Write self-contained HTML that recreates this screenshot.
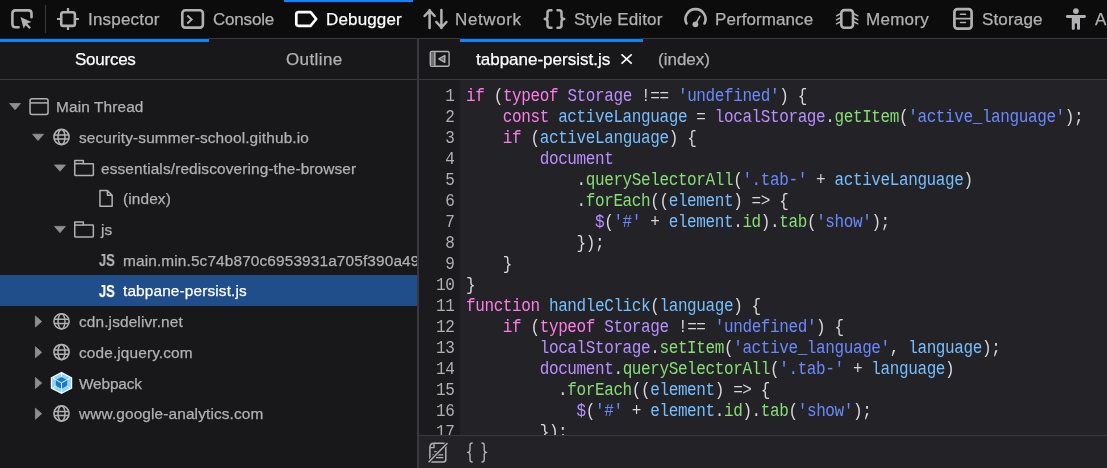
<!DOCTYPE html>
<html><head><meta charset="utf-8">
<style>
*{margin:0;padding:0;box-sizing:border-box}
html,body{width:1107px;height:468px;overflow:hidden;background:#232327}
body{position:relative;font-family:"Liberation Sans",sans-serif}
.a{position:absolute}
.t{position:absolute;white-space:pre;line-height:20px;will-change:transform;-webkit-text-stroke:0.25px currentColor}
#toolbar{left:0;top:0;width:1107px;height:38px;background:#0c0c0d}
#tbb{left:209px;top:38px;width:251px;height:1px;background:#38383d}
#tbb2{left:643px;top:38px;width:464px;height:1px;background:#38383d}
.lbl{font-size:17px;color:#b1b1b3;top:10.1px}
#left{left:0;top:39px;width:417px;height:429px;background:#18181a}
#split{left:417px;top:39px;width:2px;height:429px;background:#38383d}
.tree{font-size:15.4px;letter-spacing:0.13px;color:#b1b1b3}
.jsi{font-size:16.3px;font-weight:bold;transform:scaleX(0.8);transform-origin:0 0}
svg{position:absolute;overflow:visible}
#code{font-family:"Liberation Mono",monospace;font-size:15.35px;color:#d7d7db}
.ln{will-change:transform;position:absolute;left:419px;width:35.5px;text-align:right;color:#b0b0b3;font-family:"Liberation Mono",monospace;font-size:16px;letter-spacing:-0.39px;white-space:pre;line-height:20px;transform:scaleY(1.1);transform-origin:0 14.5px}
.cl{will-change:transform;position:absolute;left:466px;white-space:pre;line-height:20px;font-family:"Liberation Mono",monospace;font-size:16px;letter-spacing:-0.39px;color:#d7d7db;transform:scaleY(1.1);transform-origin:0 14.5px}
.k{color:#ff7de9}.v2{color:#b98eff}.v{color:#75bfff}.p{color:#86de74}.s{color:#6b89ff}
</style></head><body>
<!-- toolbar -->
<div id="toolbar" class="a"></div>
<div id="tbb" class="a"></div><div id="tbb2" class="a"></div>
<div class="a" style="left:284px;top:0;width:129px;height:2px;background:#0a84ff"></div>
<div class="a" style="left:45px;top:5px;width:1px;height:28px;background:#38383d"></div>

<!-- picker icon -->
<svg style="left:0;top:0" width="1" height="1">
  <path d="M18.6 27.3 H15.4 Q12.4 27.3 12.4 24.3 V13.4 Q12.4 10.4 15.4 10.4 H28.5 Q31.5 10.4 31.5 13.4 V17.2" fill="none" stroke="#b1b1b3" stroke-width="2.6" stroke-linecap="round"/>
  <path d="M20.5 17.1 L31.4 22.1 L27.2 23.6 L30.9 27.4 L29.3 29 L25.6 25.2 L23.6 28.6 Z" fill="#b1b1b3"/>
</svg>
<!-- inspector icon -->
<svg style="left:0;top:0" width="1" height="1">
  <rect x="61.2" y="12.3" width="13.7" height="13.6" rx="2.2" fill="none" stroke="#b1b1b3" stroke-width="2.6"/>
  <path d="M68 8 V12 M68 26 V30 M57 19 H61 M75 19 H79" stroke="#b1b1b3" stroke-width="2.2"/>
</svg>
<div class="t lbl" style="left:87.8px;letter-spacing:0.2px">Inspector</div>
<!-- console icon -->
<svg style="left:0;top:0" width="1" height="1">
  <rect x="182.3" y="10.2" width="20.6" height="17.4" rx="3" fill="none" stroke="#b1b1b3" stroke-width="2.6"/>
  <path d="M187.3 15.6 L191.6 19.6 L187.3 23.6" fill="none" stroke="#b1b1b3" stroke-width="2"/>
</svg>
<div class="t lbl" style="left:212.5px;letter-spacing:-0.2px">Console</div>
<!-- debugger icon -->
<svg style="left:0;top:0" width="1" height="1">
  <path d="M298.5 12.2 H310.6 L316.2 19 L310.6 25.8 H298.5 Q296.3 25.8 296.3 23.6 V14.4 Q296.3 12.2 298.5 12.2 Z" fill="none" stroke="#fff" stroke-width="2.7" stroke-linejoin="round"/>
</svg>
<div class="t lbl" style="left:325.8px;letter-spacing:0.15px;color:#fff">Debugger</div>
<!-- network icon -->
<svg style="left:0;top:0" width="1" height="1">
  <path d="M429.6 10 V28 M424.6 16 L429.6 10.5 L434.6 16 M441.4 10 V28 M436.4 22 L441.4 27.5 L446.4 22" fill="none" stroke="#b1b1b3" stroke-width="2.5" stroke-linecap="round" stroke-linejoin="round"/>
</svg>
<div class="t lbl" style="left:454.5px;letter-spacing:0.6px">Network</div>
<!-- style editor icon -->
<svg style="left:0;top:0" width="1" height="1">
  <path d="M551.5 10.2 H550 Q547.5 10.2 547.5 12.7 V16.5 Q547.5 19 544.8 19 Q547.5 19 547.5 21.5 V25.3 Q547.5 27.8 550 27.8 H551.5 M557.5 10.2 H559 Q561.5 10.2 561.5 12.7 V16.5 Q561.5 19 564.2 19 Q561.5 19 561.5 21.5 V25.3 Q561.5 27.8 559 27.8 H557.5" fill="none" stroke="#b1b1b3" stroke-width="2.5" stroke-linecap="round" stroke-linejoin="round"/>
</svg>
<div class="t lbl" style="left:574px;letter-spacing:0.13px">Style Editor</div>
<!-- performance icon -->
<svg style="left:0;top:0" width="1" height="1">
  <path d="M686.5 23.5 A10 10 0 1 1 704.5 23.5" fill="none" stroke="#b1b1b3" stroke-width="2.6" stroke-linecap="round"/>
  <circle cx="695.4" cy="24.3" r="2.9" fill="#b1b1b3"/>
  <path d="M695.4 24.3 L699.8 16.3" stroke="#b1b1b3" stroke-width="1.6" stroke-linecap="round"/>
</svg>
<div class="t lbl" style="left:715px;letter-spacing:0.08px">Performance</div>
<!-- memory icon -->
<svg style="left:0;top:0" width="1" height="1">
  <rect x="841.3" y="10.1" width="11.7" height="17.6" rx="3" fill="none" stroke="#b1b1b3" stroke-width="2.6"/>
  <path d="M840 14 L836.5 15.8 M840 18 L836.5 19.8 M840 22 L836.5 23.8 M854.3 14 L857.8 15.8 M854.3 18 L857.8 19.8 M854.3 22 L857.8 23.8" stroke="#b1b1b3" stroke-width="1.5" stroke-linecap="round"/>
</svg>
<div class="t lbl" style="left:866px;letter-spacing:0.28px">Memory</div>
<!-- storage icon -->
<svg style="left:0;top:0" width="1" height="1">
  <rect x="954.4" y="9.2" width="17.2" height="19.4" rx="3" fill="none" stroke="#b1b1b3" stroke-width="2.7"/>
  <path d="M955 18.6 H971 M960.5 14.3 H965.5 M960.5 22.5 H965.5" stroke="#b1b1b3" stroke-width="1.6" stroke-linecap="round"/>
</svg>
<div class="t lbl" style="left:982.3px;letter-spacing:0.15px">Storage</div>
<!-- accessibility icon -->
<svg style="left:0;top:0" width="1" height="1">
  <circle cx="1075.9" cy="11.1" r="2.9" fill="#b1b1b3"/>
  <path d="M1067.3 16.5 H1084.5" stroke="#b1b1b3" stroke-width="2.8" stroke-linecap="round"/>
  <path d="M1071.8 15.5 H1080 V23.2 H1080 V28.8 Q1080 29.7 1079 29.7 H1078 Q1077 29.7 1077 28.8 V23.5 H1074.8 V28.8 Q1074.8 29.7 1073.8 29.7 H1072.8 Q1071.8 29.7 1071.8 28.8 Z" fill="#b1b1b3"/>
</svg>
<div class="t lbl" style="left:1095px">A</div>

<!-- left pane -->
<div id="left" class="a"></div>
<div class="a" style="left:0;top:39px;width:209px;height:3px;background:#0a84ff"></div>
<div class="a" style="left:0;top:79px;width:417px;height:1px;background:#38383d"></div>
<div class="t" style="left:75px;top:50px;font-size:17px;letter-spacing:-0.25px;color:#fff">Sources</div>
<div class="t" style="left:286px;top:50px;font-size:17px;letter-spacing:0.4px;color:#b1b1b3">Outline</div>

<div class="a" style="left:0;top:0;width:417px;height:468px;overflow:hidden"><svg style="left:0;top:0" width="1" height="1"><path d="M9.6 103.50 H20.5 L15.1 109.80 Z" fill="#8f8f92" stroke="#8f8f92" stroke-width="0.8" stroke-linejoin="round"/><rect x="30.05" y="98.65" width="18" height="15.8" rx="2" fill="none" stroke="#b1b1b3" stroke-width="1.5"/><path d="M30.05 102.90 H48.05" stroke="#b1b1b3" stroke-width="1.5"/><path d="M32.6 134.22 H43.5 L38.0 140.52 Z" fill="#8f8f92" stroke="#8f8f92" stroke-width="0.8" stroke-linejoin="round"/><circle cx="61.50" cy="137.02" r="7.6" fill="none" stroke="#b1b1b3" stroke-width="1.6"/><ellipse cx="61.50" cy="137.02" rx="3.5" ry="7.6" fill="none" stroke="#b1b1b3" stroke-width="1.5"/><path d="M54.20 134.92 H68.80 M54.20 139.12 H68.80" stroke="#b1b1b3" stroke-width="1.5"/><path d="M54.5 164.94 H65.4 L60.0 171.24 Z" fill="#8f8f92" stroke="#8f8f92" stroke-width="0.8" stroke-linejoin="round"/><path d="M74.75 160.44 H83.30 V163.64 H92.70 Q93.35 163.64 93.35 164.34 V174.84 Q93.35 175.49 92.70 175.49 H75.40 Q74.75 175.49 74.75 174.84 Z" fill="none" stroke="#b1b1b3" stroke-width="1.5" stroke-linejoin="round"/><path d="M74.75 163.64 H83.30" stroke="#b1b1b3" stroke-width="1.5"/><path d="M99.95 190.41 H107.40 L112.15 195.16 V206.21 H99.95 Z M107.40 190.41 V195.16 H112.15" fill="none" stroke="#b1b1b3" stroke-width="1.5" stroke-linejoin="round"/><path d="M54.5 226.38 H65.4 L60.0 232.68 Z" fill="#8f8f92" stroke="#8f8f92" stroke-width="0.8" stroke-linejoin="round"/><path d="M74.75 221.88 H83.30 V225.08 H92.70 Q93.35 225.08 93.35 225.78 V236.28 Q93.35 236.93 92.70 236.93 H75.40 Q74.75 236.93 74.75 236.28 Z" fill="none" stroke="#b1b1b3" stroke-width="1.5" stroke-linejoin="round"/><path d="M74.75 225.08 H83.30" stroke="#b1b1b3" stroke-width="1.5"/><path d="M35.4 316.0 L41.7 321.5 L35.4 327.0 Z" fill="#8f8f92" stroke="#8f8f92" stroke-width="0.8" stroke-linejoin="round"/><circle cx="61.50" cy="321.34" r="7.6" fill="none" stroke="#b1b1b3" stroke-width="1.6"/><ellipse cx="61.50" cy="321.34" rx="3.5" ry="7.6" fill="none" stroke="#b1b1b3" stroke-width="1.5"/><path d="M54.20 319.24 H68.80 M54.20 323.44 H68.80" stroke="#b1b1b3" stroke-width="1.5"/><path d="M35.4 346.8 L41.7 352.3 L35.4 357.8 Z" fill="#8f8f92" stroke="#8f8f92" stroke-width="0.8" stroke-linejoin="round"/><circle cx="61.50" cy="352.06" r="7.6" fill="none" stroke="#b1b1b3" stroke-width="1.6"/><ellipse cx="61.50" cy="352.06" rx="3.5" ry="7.6" fill="none" stroke="#b1b1b3" stroke-width="1.5"/><path d="M54.20 349.96 H68.80 M54.20 354.16 H68.80" stroke="#b1b1b3" stroke-width="1.5"/><path d="M35.4 377.5 L41.7 383.0 L35.4 388.5 Z" fill="#8f8f92" stroke="#8f8f92" stroke-width="0.8" stroke-linejoin="round"/><polygon points="61.50,371.87 72.21,377.40 72.21,388.46 61.50,393.99 50.79,388.46 50.79,377.40" fill="#fff"/><polygon points="61.50,373.23 70.90,378.08 70.90,387.78 61.50,392.63 52.10,387.78 52.10,378.08" fill="#8ed6fb"/><polygon points="61.50,377.11 67.14,380.02 67.14,385.84 61.50,388.75 55.86,385.84 55.86,380.02" fill="#1c78c0"/><path d="M61.50 372.93 V376.93 M61.50 392.93 V388.93 M52.84 377.93 L56.30 379.93 M70.16 377.93 L66.70 379.93 M52.84 387.93 L56.30 385.93 M70.16 387.93 L66.70 385.93 M56.30 379.93 L61.50 382.93 L66.70 379.93 M61.50 382.93 V388.93" stroke="#fff" stroke-width="0.9" fill="none"/><path d="M35.4 408.2 L41.7 413.7 L35.4 419.2 Z" fill="#8f8f92" stroke="#8f8f92" stroke-width="0.8" stroke-linejoin="round"/><circle cx="61.50" cy="413.50" r="7.6" fill="none" stroke="#b1b1b3" stroke-width="1.6"/><ellipse cx="61.50" cy="413.50" rx="3.5" ry="7.6" fill="none" stroke="#b1b1b3" stroke-width="1.5"/><path d="M54.20 411.40 H68.80 M54.20 415.60 H68.80" stroke="#b1b1b3" stroke-width="1.5"/></svg>
<div class="a" style="left:0;top:275px;width:417px;height:31px;background:#204e8a"></div>
<div class="t tree" style="left:56.4px;top:97.10px;color:#b1b1b3">Main Thread</div>
<div class="t tree" style="left:78.8px;top:127.82px;color:#b1b1b3">security-summer-school.github.io</div>
<div class="t tree" style="left:101.2px;top:158.54px;color:#b1b1b3">essentials/rediscovering-the-browser</div>
<div class="t tree" style="left:123.4px;top:189.26px;color:#b1b1b3">(index)</div>
<div class="t tree" style="left:100.8px;top:219.98px;color:#b1b1b3">js</div>
<div class="t jsi" style="left:98.7px;top:250.00px;color:#b1b1b3">JS</div>
<div class="t tree" style="left:123.4px;top:250.70px;color:#b1b1b3">main.min.5c74b870c6953931a705f390a49d8f5f3b52f9db1f6ff7c5c8b5e1db9b9c3e8a.js</div>
<div class="t jsi" style="left:98.7px;top:280.72px;color:#fff">JS</div>
<div class="t tree" style="left:123.4px;top:281.42px;color:#fff">tabpane-persist.js</div>
<div class="t tree" style="left:78.8px;top:312.14px;color:#b1b1b3">cdn.jsdelivr.net</div>
<div class="t tree" style="left:78.8px;top:342.86px;color:#b1b1b3">code.jquery.com</div>
<div class="t tree" style="left:78.8px;top:373.58px;color:#b1b1b3;letter-spacing:-0.15px">Webpack</div>
<div class="t tree" style="left:78.8px;top:404.30px;color:#b1b1b3">www.google-analytics.com</div></div>

<!-- splitter -->
<div id="split" class="a"></div>

<!-- editor tabs -->
<div class="a" style="left:419px;top:39px;width:688px;height:40px;background:#18181a"></div>
<div class="a" style="left:419px;top:79px;width:688px;height:1px;background:#38383d"></div>
<div class="a" style="left:460px;top:39px;width:183px;height:3px;background:#0a84ff"></div>
<svg style="left:0;top:0" width="1" height="1">
  <rect x="430.3" y="51.5" width="18.8" height="14.8" rx="1.5" fill="none" stroke="#b1b1b3" stroke-width="1.4"/>
  <rect x="431" y="52.2" width="4" height="13.4" fill="#6e6e70"/>
  <path d="M434.9 51.5 V66.3" stroke="#b1b1b3" stroke-width="1.4"/>
  <path d="M438.8 58.9 L444.8 55.5 V62.3 Z" fill="#6a6a6d" stroke="#b1b1b3" stroke-width="1.4" stroke-linejoin="round"/>
</svg>
<div class="t" style="left:476px;top:50px;font-size:17px;color:#fff">tabpane-persist.js</div>
<svg style="left:0;top:0" width="1" height="1">
  <path d="M621.5 54.3 L631.7 63.7 M631.7 54.3 L621.5 63.7" stroke="#fff" stroke-width="1.6"/>
</svg>
<div class="t" style="left:658px;top:50px;font-size:17px;color:#b1b1b3">(index)</div>

<!-- gutter + code -->
<div class="a" style="left:419px;top:80px;width:41px;height:355px;background:#1b1b1e"></div>
<div class="a" style="left:0;top:0;width:1107px;height:435px;overflow:hidden"><div class="ln" style="top:87.10px">1</div>
<div class="cl" style="top:87.10px"><span class="k">if</span> (<span class="k">typeof</span> <span class="v2">Storage</span> !== <span class="s">&#x27;undefined&#x27;</span>) {</div>
<div class="ln" style="top:108.07px">2</div>
<div class="cl" style="top:108.07px">    <span class="k">const</span> <span class="v">activeLanguage</span> = <span class="v2">localStorage</span>.<span class="p">getItem</span>(<span class="s">&#x27;active_language&#x27;</span>);</div>
<div class="ln" style="top:129.04px">3</div>
<div class="cl" style="top:129.04px">    <span class="k">if</span> (<span class="v">activeLanguage</span>) {</div>
<div class="ln" style="top:150.01px">4</div>
<div class="cl" style="top:150.01px">        <span class="v2">document</span></div>
<div class="ln" style="top:170.98px">5</div>
<div class="cl" style="top:170.98px">            .<span class="p">querySelectorAll</span>(<span class="s">&#x27;.tab-&#x27;</span> + <span class="v">activeLanguage</span>)</div>
<div class="ln" style="top:191.95px">6</div>
<div class="cl" style="top:191.95px">            .<span class="p">forEach</span>((<span class="v">element</span>) =&gt; {</div>
<div class="ln" style="top:212.92px">7</div>
<div class="cl" style="top:212.92px">              <span class="v2">$</span>(<span class="s">&#x27;#&#x27;</span> + <span class="v">element</span>.<span class="p">id</span>).<span class="p">tab</span>(<span class="s">&#x27;show&#x27;</span>);</div>
<div class="ln" style="top:233.89px">8</div>
<div class="cl" style="top:233.89px">            });</div>
<div class="ln" style="top:254.86px">9</div>
<div class="cl" style="top:254.86px">    }</div>
<div class="ln" style="top:275.83px">10</div>
<div class="cl" style="top:275.83px">}</div>
<div class="ln" style="top:296.80px">11</div>
<div class="cl" style="top:296.80px"><span class="k">function</span> <span class="v">handleClick</span>(<span class="v">language</span>) {</div>
<div class="ln" style="top:317.77px">12</div>
<div class="cl" style="top:317.77px">    <span class="k">if</span> (<span class="k">typeof</span> <span class="v2">Storage</span> !== <span class="s">&#x27;undefined&#x27;</span>) {</div>
<div class="ln" style="top:338.74px">13</div>
<div class="cl" style="top:338.74px">        <span class="v2">localStorage</span>.<span class="p">setItem</span>(<span class="s">&#x27;active_language&#x27;</span>, <span class="v">language</span>);</div>
<div class="ln" style="top:359.71px">14</div>
<div class="cl" style="top:359.71px">        <span class="v2">document</span>.<span class="p">querySelectorAll</span>(<span class="s">&#x27;.tab-&#x27;</span> + <span class="v">language</span>)</div>
<div class="ln" style="top:380.68px">15</div>
<div class="cl" style="top:380.68px">          .<span class="p">forEach</span>((<span class="v">element</span>) =&gt; {</div>
<div class="ln" style="top:401.65px">16</div>
<div class="cl" style="top:401.65px">            <span class="v2">$</span>(<span class="s">&#x27;#&#x27;</span> + <span class="v">element</span>.<span class="p">id</span>).<span class="p">tab</span>(<span class="s">&#x27;show&#x27;</span>);</div>
<div class="ln" style="top:422.62px">17</div>
<div class="cl" style="top:422.62px">        });</div></div>

<!-- footer -->
<div class="a" style="left:419px;top:435px;width:688px;height:1px;background:#38383d"></div>
<div class="a" style="left:419px;top:436px;width:688px;height:32px;background:#232327"></div>
<svg style="left:0;top:0" width="1" height="1">
  <path d="M434 443.2 H443.3 Q445.8 443.2 445.8 445.7 V459.6 Q445.8 462.1 443.3 462.1 H432.4 Q429.9 462.1 429.9 459.6 V447.6 Q429.9 443.2 434 443.2 Z" fill="none" stroke="#b1b1b3" stroke-width="1.5" stroke-linejoin="round"/>
  <path d="M434 443.2 V447.6 H429.9" fill="none" stroke="#b1b1b3" stroke-width="1.4"/>
  <path d="M434.3 451.7 H438 M432.6 454.8 H443.2 M436 457.7 H443.2" stroke="#b1b1b3" stroke-width="1.3"/>
  <path d="M428.6 462.3 L447.5 442.9" stroke="#232327" stroke-width="3.4"/>
  <path d="M428.6 462.3 L447.5 442.9" stroke="#b1b1b3" stroke-width="1.5"/>
  <path d="M472.2 443 Q470 443 470 445.5 V450 Q470 452.4 467.6 452.4 Q470 452.4 470 454.8 V459.5 Q470 462 472.2 462 M482 443 Q484.2 443 484.2 445.5 V450 Q484.2 452.4 486.6 452.4 Q484.2 452.4 484.2 454.8 V459.5 Q484.2 462 482 462" fill="none" stroke="#b1b1b3" stroke-width="1.4" stroke-linecap="round" stroke-linejoin="round"/>
</svg>
</body></html>
